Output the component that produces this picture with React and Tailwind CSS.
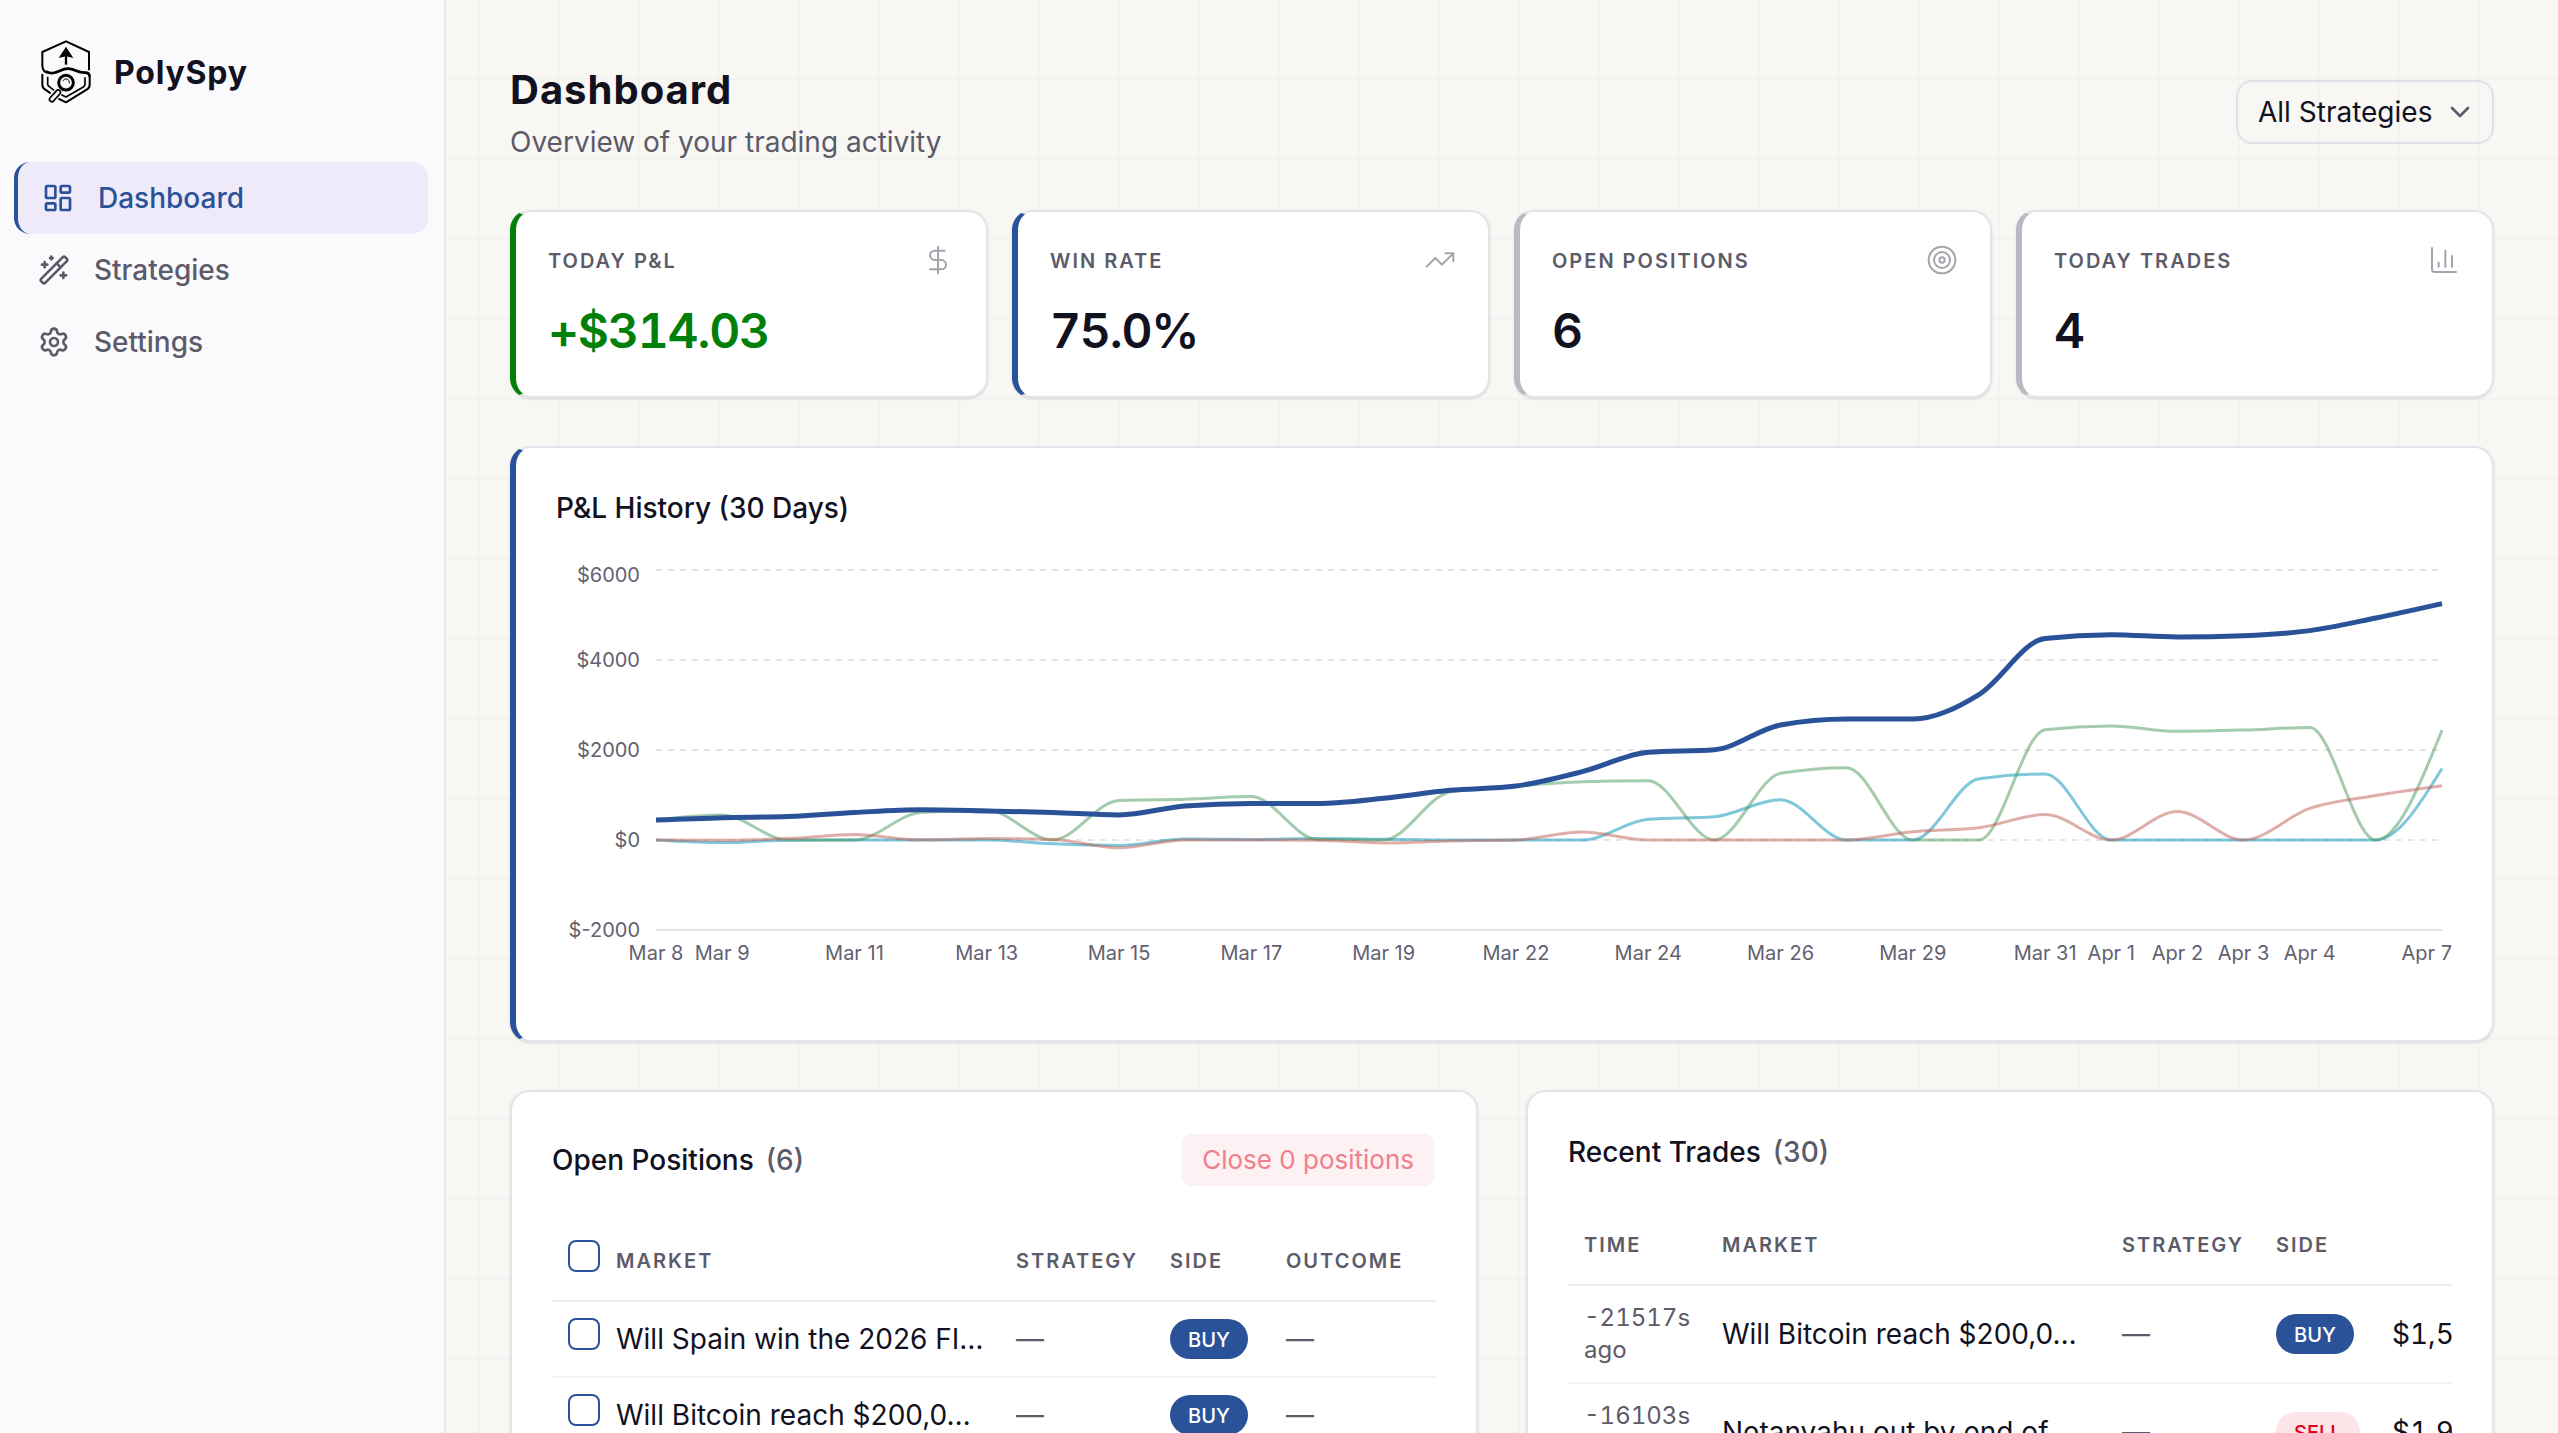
import { useLayoutEffect, useRef, useState } from "react";
import {
  ChartColumn,
  ChevronDown,
  DollarSign,
  LayoutDashboard,
  Settings,
  Target,
  TrendingUp,
  WandSparkles,
} from "lucide-react";

const navItems = [
  { label: "Dashboard", icon: LayoutDashboard, active: true },
  { label: "Strategies", icon: WandSparkles },
  { label: "Settings", icon: Settings },
];

const stats = [
  {
    label: "Today P&L",
    value: "+$314.03",
    icon: DollarSign,
    accent: "border-l-[#008009]",
    color: "text-[#008009]",
  },
  {
    label: "Win Rate",
    value: "75.0%",
    icon: TrendingUp,
    accent: "border-l-[#2a5298]",
    color: "text-[#12111f]",
  },
  {
    label: "Open Positions",
    value: "6",
    icon: Target,
    accent: "border-l-[#b9b9c3]",
    color: "text-[#12111f]",
  },
  {
    label: "Today Trades",
    value: "4",
    icon: ChartColumn,
    accent: "border-l-[#b9b9c3]",
    color: "text-[#12111f]",
  },
];

const positions = [
  { id: 1, market: "Will Spain win the 2026 FI…", side: "BUY" },
  { id: 2, market: "Will Bitcoin reach $200,0…", side: "BUY" },
];

const trades = [
  {
    id: 1,
    time: "-21517s ago",
    market: "Will Bitcoin reach $200,0…",
    side: "BUY",
    size: "$1,5",
  },
  {
    id: 2,
    time: "-16103s ago",
    market: "Netanyahu out by end of…",
    side: "SELL",
    size: "$1,9",
  },
];

const series = [
  {
    name: "momentum",
    color: "#008fb5",
    width: 3,
    opacity: 0.5,
    values: [
      0, -58, -4, 0, 0, 0, -84, -120, 22, 13, 31, 16, 0, 0, 0, 460, 518, 896, 0,
      0, 1362, 1467, 0, 0, 0, 0, 0, 1589,
    ],
  },
  {
    name: "copy",
    color: "#47975b",
    width: 3,
    opacity: 0.5,
    values: [
      450, 556, 0, 0, 611, 667, 0, 880, 907, 969, 10, 0, 1067, 1200, 1296, 1318,
      0, 1482, 1607, 0, 0, 2451, 2533, 2416, 2444, 2498, 0, 2438,
    ],
  },
  {
    name: "arbitrage",
    color: "#c15d51",
    width: 3,
    opacity: 0.5,
    values: [
      0, -4, 31, 120, 4, 31, 9, -173, 0, 0, -4, -67, -22, 0, 178, 0, 0, 0, 0,
      184, 273, 567, 0, 633, 0, 702, 987, 1204,
    ],
  },
  {
    name: "total",
    color: "#2a5298",
    width: 5,
    opacity: 1,
    values: [
      442, 496, 522, 611, 673, 647, 611, 558, 756, 809, 811, 927, 1104, 1200,
      1518, 1949, 2007, 2556, 2689, 2689, 3233, 4480, 4562, 4511, 4540, 4653,
      4933, 5253,
    ],
  },
];

const xTicks = [
  [0, "Mar 8"],
  [1, "Mar 9"],
  [3, "Mar 11"],
  [5, "Mar 13"],
  [7, "Mar 15"],
  [9, "Mar 17"],
  [11, "Mar 19"],
  [13, "Mar 22"],
  [15, "Mar 24"],
  [17, "Mar 26"],
  [19, "Mar 29"],
  [21, "Mar 31"],
  [22, "Apr 1"],
  [23, "Apr 2"],
  [24, "Apr 3"],
  [25, "Apr 4"],
];

const yTicks = [6000, 4000, 2000, 0, -2000];

// Monotone cubic interpolation, so the curves never overshoot their points
function monotonePath(points) {
  const n = points.length;
  const slopes = [];
  for (let i = 0; i < n - 1; i++) {
    slopes.push(
      (points[i + 1].y - points[i].y) / (points[i + 1].x - points[i].x)
    );
  }
  const tangents = points.map((_, i) => {
    if (i === 0 || i === n - 1) return 0;
    const a = slopes[i - 1];
    const b = slopes[i];
    if (a * b <= 0) return 0;
    return (
      Math.sign(a) *
      2 *
      Math.min(Math.abs(a), Math.abs(b), Math.abs(a + b) / 4)
    );
  });
  tangents[0] = (3 * slopes[0] - tangents[1]) / 2;
  tangents[n - 1] = (3 * slopes[n - 2] - tangents[n - 2]) / 2;

  let d = `M${points[0].x},${points[0].y}`;
  for (let i = 0; i < n - 1; i++) {
    const p = points[i];
    const q = points[i + 1];
    const dx = (q.x - p.x) / 3;
    d += `C${p.x + dx},${p.y + dx * tangents[i]},${q.x - dx},${
      q.y - dx * tangents[i + 1]
    },${q.x},${q.y}`;
  }
  return d;
}

function PnlChart() {
  const ref = useRef(null);
  const [width, setWidth] = useState(1896);

  useLayoutEffect(() => {
    const update = () => setWidth(ref.current.clientWidth);
    update();
    window.addEventListener("resize", update);
    return () => window.removeEventListener("resize", update);
  }, []);

  const left = 100;
  const right = width - 10;
  const step = (right - left) / 27;
  const x = (i) => left + i * step;
  const y = (v) => 10 + ((6000 - v) / 8000) * 360;

  return (
    <div ref={ref} className="mt-8 w-full">
      <svg
        width={width}
        height={440}
        role="img"
        aria-label="P&L history"
        className="block text-[20px]"
      >
        {yTicks.map((v) => (
          <g key={v}>
            <line
              x1={left}
              x2={right}
              y1={y(v)}
              y2={y(v)}
              stroke="#e3e3e9"
              strokeWidth="2"
              strokeDasharray={v === -2000 ? undefined : "6 6"}
            />
            <text
              x={left - 16}
              y={v === 6000 ? y(v) + 12 : y(v) + 7}
              textAnchor="end"
              fill="#62616f"
            >
              ${v}
            </text>
          </g>
        ))}
        {xTicks.map(([i, label]) => (
          <text key={label} x={x(i)} y={400} textAnchor="middle" fill="#62616f">
            {label}
          </text>
        ))}
        <text x={width} y={400} textAnchor="end" fill="#62616f">
          Apr 7
        </text>
        {series.map((s) => (
          <path
            key={s.name}
            d={monotonePath(s.values.map((v, i) => ({ x: x(i), y: y(v) })))}
            fill="none"
            stroke={s.color}
            strokeWidth={s.width}
            strokeOpacity={s.opacity}
          />
        ))}
      </svg>
    </div>
  );
}

function Logo() {
  return (
    <svg
      viewBox="0 0 192 192"
      className="size-16"
      fill="none"
      stroke="#000"
      strokeWidth="6"
      strokeLinejoin="round"
      aria-hidden="true"
    >
      <path d="M165 91V36L96 4L25 36V76Q25 98 46 99" />
      <path
        d="M36 94C64 110 78 84 104 86C128 88 128 99 154 98Q166 98 167 110"
        strokeWidth="8"
      />
      <path d="M25 102V134Q25 143 33 148L50 160" />
      <path d="M167 106V134Q167 143 159 148L96 187L73 176" />
      <path
        d="M41 110V132Q41 137 46 140L60 151M153 112V132Q153 137 148 141L96 171L82 164"
        strokeWidth="5"
      />
      <path d="M96 20L118 54L96 49L74 54Z" fill="#000" stroke="none" />
      <path d="M96 46V74" strokeWidth="7" />
      <circle cx="96" cy="128" r="22" fill="#fafafd" strokeWidth="9" />
      <path d="M86 123Q92 114 100 117Q107 121 106 130" strokeWidth="3" />
      <rect
        x="-7"
        y="0"
        width="14"
        height="42"
        rx="7"
        strokeWidth="5"
        fill="#fafafd"
        transform="translate(77 152) rotate(42)"
      />
    </svg>
  );
}

function Sidebar() {
  return (
    <aside className="w-[446px] shrink-0 border-r-2 border-[#e7e7ef] bg-[#fafafd]">
      <div className="flex items-center gap-4 px-[34px] pt-10">
        <Logo />
        <span className="pt-0.5 text-[32px] font-bold tracking-wide text-[#12111f]">
          PolySpy
        </span>
      </div>
      <nav className="mt-[58px] pr-4 pl-[14px]">
        {navItems.map(({ label, icon: Icon, active }) => (
          <a
            key={label}
            href="#"
            className={`flex h-[72px] items-center gap-6 rounded-2xl px-6 text-[28px] font-medium ${
              active
                ? "border-l-4 border-[#2a5298] bg-[#eeeaf9] text-[#2a5298]"
                : "text-[#5c5b69]"
            }`}
          >
            <Icon size={32} />
            {label}
          </a>
        ))}
      </nav>
    </aside>
  );
}

function StatCard({ label, value, icon: Icon, accent, color }) {
  return (
    <div
      className={`rounded-[20px] border-2 border-l-6 border-[#e4e4eb] bg-white p-8 shadow-sm ${accent}`}
    >
      <div className="flex h-8 items-center justify-between">
        <span className="pt-0.5 text-[20px] leading-8 font-semibold tracking-[2px] text-[#5c5b69] uppercase">
          {label}
        </span>
        <Icon size={32} strokeWidth={1.5} className="text-[#a5a4ac]" />
      </div>
      <p
        className={`mt-[22px] text-[48px] leading-[66px] font-semibold tracking-tight tabular-nums ${color}`}
      >
        {value}
      </p>
    </div>
  );
}

function SideBadge({ side }) {
  return (
    <span
      className={`inline-flex h-10 items-center rounded-full px-[18px] pt-0.5 align-middle text-[20px] font-medium ${
        side === "BUY" ? "bg-[#2a5298] text-white" : "bg-[#fce5e8] text-[#e3001b]"
      }`}
    >
      {side}
    </span>
  );
}

function Th({ children }) {
  return (
    <th className="h-[81px] px-4 pt-0.5 text-left text-[20px] leading-8 font-semibold tracking-[2px] uppercase">
      {children}
    </th>
  );
}

function Checkbox({ label }) {
  return (
    <input
      type="checkbox"
      aria-label={label}
      className="block size-8 appearance-none rounded-lg border-2 border-[#2a5298] bg-white"
    />
  );
}

function OpenPositions() {
  return (
    <section className="min-w-0 rounded-[20px] border-2 border-[#e4e4eb] bg-white p-10 shadow-sm">
      <div className="flex items-center justify-between">
        <h2 className="text-[28px] leading-10 font-medium">
          Open Positions
          <span className="ml-3 text-[#5c5b69]">(6)</span>
        </h2>
        <button
          type="button"
          disabled
          className="h-14 rounded-xl border-2 border-transparent bg-[#fdf1f3] bg-clip-padding px-5 pb-0.5 text-[26px] text-[#f07f8b]"
        >
          Close 0 positions
        </button>
      </div>
      <div className="mt-8 overflow-hidden">
        <table className="w-full table-fixed border-collapse">
          <colgroup>
            <col className="w-12" />
            <col className="w-[400px]" />
            <col className="w-[154px]" />
            <col className="w-[116px]" />
            <col />
          </colgroup>
          <thead>
            <tr className="border-b-2 border-[#eeeef1] text-[#5c5b69]">
              <th className="pt-5 pl-4 align-top">
                <Checkbox label="Select all positions" />
              </th>
              <Th>Market</Th>
              <Th>Strategy</Th>
              <Th>Side</Th>
              <Th>Outcome</Th>
            </tr>
          </thead>
          <tbody>
            {positions.map((p) => (
              <tr key={p.id} className="h-[76px] border-b-2 border-[#f5f5f7]">
                <td className="pt-4 pl-4 align-top">
                  <Checkbox label={`Select ${p.market}`} />
                </td>
                <td className="px-4 text-[28px] whitespace-nowrap">{p.market}</td>
                <td className="px-4 text-[28px] text-[#5c5b69]">—</td>
                <td className="px-4">
                  <SideBadge side={p.side} />
                </td>
                <td className="px-4 text-[28px] text-[#5c5b69]">—</td>
              </tr>
            ))}
          </tbody>
        </table>
      </div>
    </section>
  );
}

function RecentTrades() {
  return (
    <section className="min-w-0 rounded-[20px] border-2 border-[#e4e4eb] bg-white p-10 shadow-sm">
      <h2 className="text-[28px] leading-10 font-medium">
        Recent Trades
        <span className="ml-3 text-[#5c5b69]">(30)</span>
      </h2>
      <div className="mt-8 overflow-hidden">
        <table className="w-full table-fixed border-collapse">
          <colgroup>
            <col className="w-[138px]" />
            <col className="w-[400px]" />
            <col className="w-[154px]" />
            <col className="w-[116px]" />
            <col />
          </colgroup>
          <thead>
            <tr className="border-b-2 border-[#eeeef1] text-[#5c5b69]">
              <Th>Time</Th>
              <Th>Market</Th>
              <Th>Strategy</Th>
              <Th>Side</Th>
              <Th />
            </tr>
          </thead>
          <tbody>
            {trades.map((t) => (
              <tr key={t.id} className="border-b-2 border-[#f5f5f7]">
                <td className="p-4 pr-0 text-[24px] leading-8 text-[#5c5b69] tabular-nums">
                  {t.time}
                </td>
                <td className="px-4 text-[28px] whitespace-nowrap">{t.market}</td>
                <td className="px-4 text-[28px] text-[#5c5b69]">—</td>
                <td className="px-4">
                  <SideBadge side={t.side} />
                </td>
                <td className="pl-4 text-[28px] tabular-nums">{t.size}</td>
              </tr>
            ))}
          </tbody>
        </table>
      </div>
    </section>
  );
}

export default function App() {
  return (
    <div className="flex h-screen overflow-hidden bg-[#f8f7f3] bg-[linear-gradient(to_right,transparent_78px,#f3f3f2_78px),linear-gradient(to_bottom,transparent_78px,#f3f3f2_78px)] bg-size-[80px_80px] font-[Inter,sans-serif] text-[#12111f]">
      <Sidebar />
      <main className="min-w-0 flex-1 overflow-hidden p-16">
        <header className="flex items-start justify-between">
          <div>
            <h1 className="text-[40px] leading-[52px] font-bold tracking-wide">
              Dashboard
            </h1>
            <p className="mt-1.5 text-[28px] leading-10 text-[#5c5b69]">
              Overview of your trading activity
            </p>
          </div>
          <div className="relative mt-4">
            <select
              aria-label="Strategy"
              className="h-16 w-[258px] appearance-none rounded-2xl border-2 border-[#e0e0e8] bg-transparent pl-5 text-[28px]"
            >
              <option>All Strategies</option>
            </select>
            <ChevronDown
              size={32}
              className="pointer-events-none absolute top-4 right-[18px] text-[#5c5b69]"
            />
          </div>
        </header>

        <div className="mt-12 grid grid-cols-4 gap-6">
          {stats.map((s) => (
            <StatCard key={s.label} {...s} />
          ))}
        </div>

        <section className="mt-12 rounded-[20px] border-2 border-l-6 border-[#e4e4eb] border-l-[#2a5298] bg-white p-10 shadow-sm">
          <h2 className="text-[28px] leading-10 font-medium">
            P&L History (30 Days)
          </h2>
          <PnlChart />
        </section>

        <div className="mt-12 grid grid-cols-2 gap-12">
          <OpenPositions />
          <RecentTrades />
        </div>
      </main>
    </div>
  );
}
